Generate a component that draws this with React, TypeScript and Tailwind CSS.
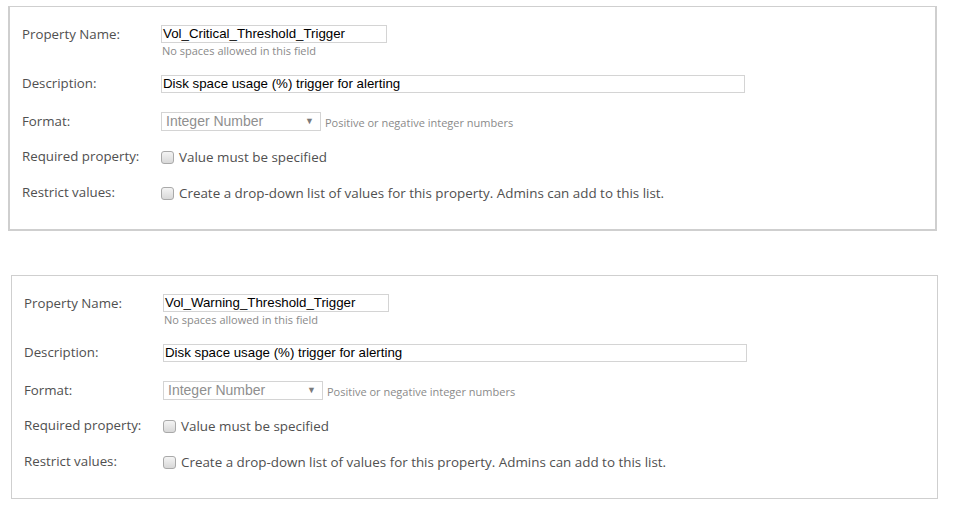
import React from 'react';

type Prop = {
  name: string;
  description: string;
};

const labelFont = { fontFamily: '"Open Sans", "DejaVu Sans", sans-serif' };
const inputFont = { fontFamily: '"Liberation Sans", Arial, sans-serif' };

const Checkbox: React.FC = () => (
  <span className="inline-block w-[13px] h-[13px] rounded-[3px] border border-[#a9a9a9] bg-gradient-to-b from-[#f4f4f4] to-[#d8d8d8] shrink-0" />
);

const Row: React.FC<{ label: string; className?: string; children: React.ReactNode }> = ({ label, className, children }) => (
  <div className={`flex ${className ?? ''}`}>
    <div className="w-[139px] shrink-0 text-[13.3px] text-[#505050]" style={labelFont}>
      {label}
    </div>
    <div className="flex-1">{children}</div>
  </div>
);

const PropertyPanel: React.FC<{ prop: Prop; className: string }> = ({ prop, className }) => (
  <div className={`bg-white border-[#cfcfcf] ${className}`}>
    <Row label="Property Name:" className="items-start leading-[18px]">
      <div className="w-[226px] h-[18px] border border-[#d4d4d4] px-[1px] text-[13.3px] leading-[16px] text-black" style={inputFont}>
        {prop.name}
      </div>
      <div className="text-[11px] leading-[14px] text-[#8a8a8a] mt-[1px] ml-[1px]" style={labelFont}>
        No spaces allowed in this field
      </div>
    </Row>

    <Row label="Description:" className="items-center mt-[17px] h-[18px]">
      <div className="w-[584px] h-[18px] border border-[#d4d4d4] px-[1px] text-[13.3px] leading-[16px] text-black" style={inputFont}>
        {prop.description}
      </div>
    </Row>

    <Row label="Format:" className="items-center mt-[19px] h-[19px]">
      <div className="flex items-center">
        <div className="w-[160px] h-[19px] border border-[#d4d4d4] flex items-center justify-between pl-[4px] pr-[6px] text-[14px] text-[#8f8f8f]" style={inputFont}>
          <span>Integer Number</span>
          <span className="text-[9px] text-[#7a7a7a]">▼</span>
        </div>
        <span className="ml-[4px] mt-[3px] text-[11px] text-[#8a8a8a]" style={labelFont}>
          Positive or negative integer numbers
        </span>
      </div>
    </Row>

    <Row label="Required property:" className="items-center mt-[16px] h-[20px]">
      <div className="flex items-center gap-[5px] text-[13.4px] text-[#505050]" style={labelFont}>
        <Checkbox />
        <span>Value must be specified</span>
      </div>
    </Row>

    <Row label="Restrict values:" className="items-center mt-[16px] h-[20px]">
      <div className="flex items-center gap-[5px] text-[13.4px] text-[#505050]" style={labelFont}>
        <Checkbox />
        <span>Create a drop-down list of values for this property. Admins can add to this list.</span>
      </div>
    </Row>
  </div>
);

const App: React.FC = () => {
  return (
    <div className="w-[956px] h-[517px] bg-white overflow-hidden">
      <div className="pt-[6px] pl-[8px]">
        <PropertyPanel
          prop={{ name: 'Vol_Critical_Threshold_Trigger', description: 'Disk space usage (%) trigger for alerting' }}
          className="w-[929px] h-[225px] border-l-2 border-t border-r-2 border-b-2 pt-[18px] pl-[12px]"
        />
      </div>
      <div className="mt-[44px] pl-[11px]">
        <PropertyPanel
          prop={{ name: 'Vol_Warning_Threshold_Trigger', description: 'Disk space usage (%) trigger for alerting' }}
          className="w-[927px] h-[224px] border pt-[18px] pl-[12px]"
        />
      </div>
    </div>
  );
};

export default App;
